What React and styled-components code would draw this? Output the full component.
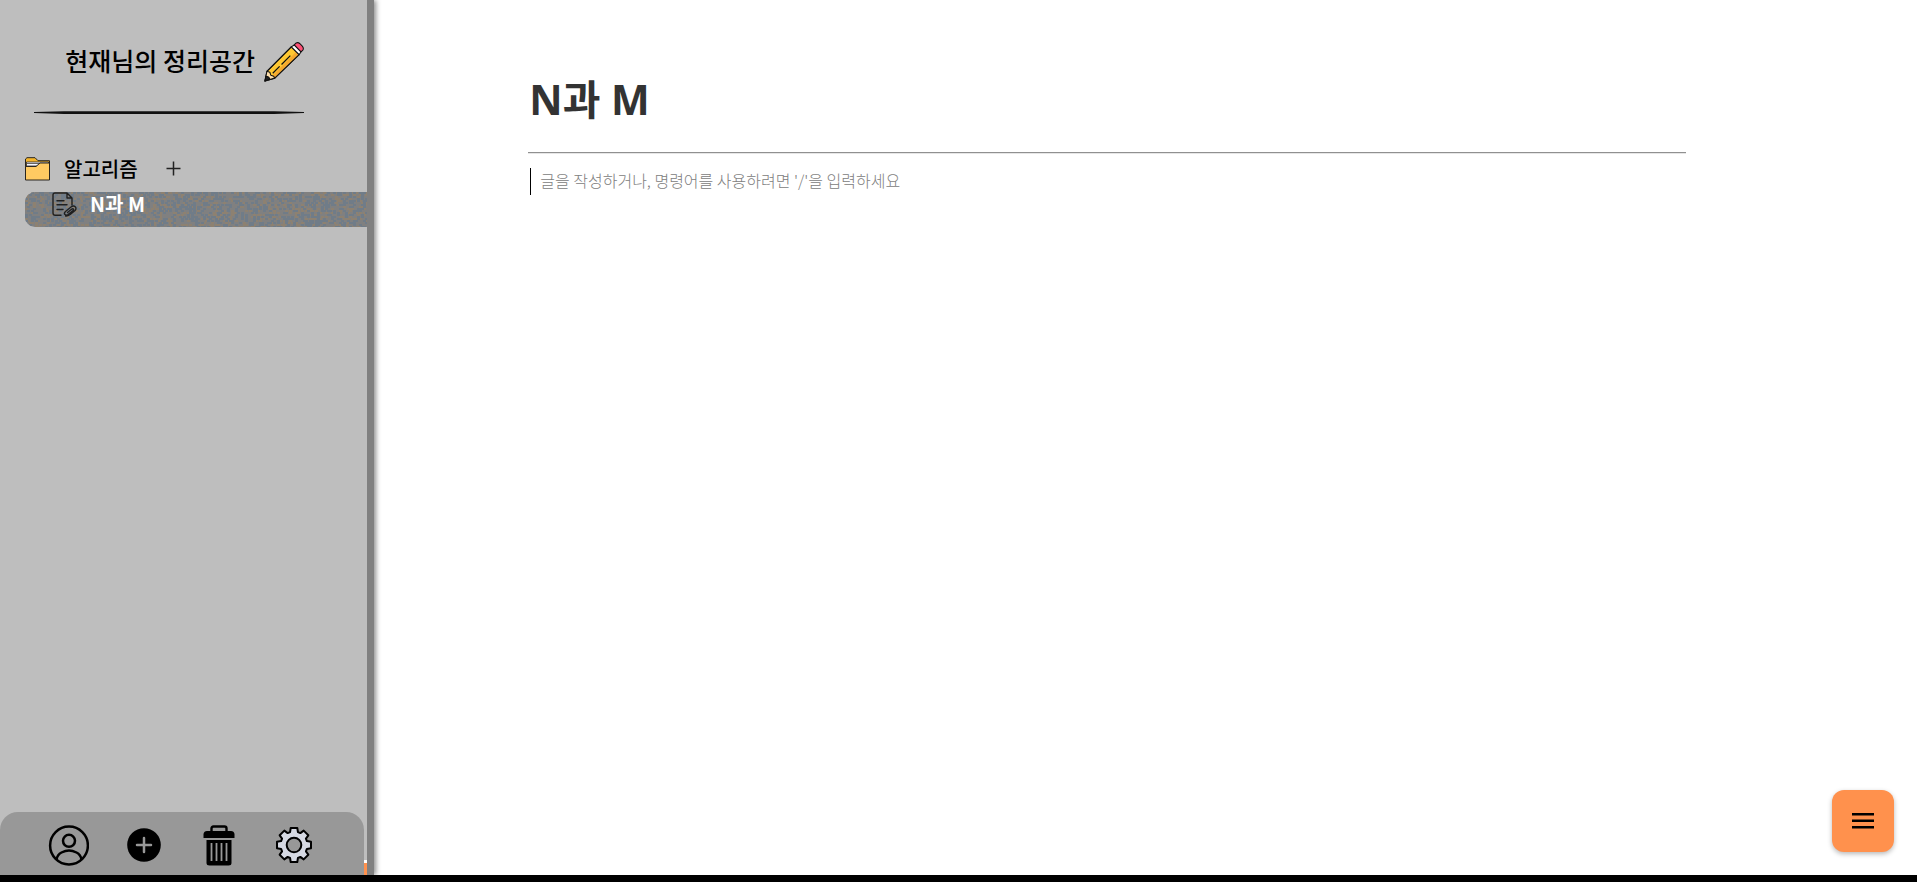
import React from "react";
import styled, { createGlobalStyle } from "styled-components";

const GlobalStyle = createGlobalStyle`
  *, *::before, *::after { box-sizing: border-box; }
  body { margin: 0; background: #000; }
  button { padding: 0; border: 0; background: none; color: inherit; font: inherit; cursor: pointer; }
  svg { display: block; }
`;

const Page = styled.div`
  display: flex;
  height: 100vh;
  border-bottom: 7px solid #000;
  background: #fff;
  font-family: "Noto Sans CJK KR", sans-serif;
`;

const Sidebar = styled.aside`
  display: flex;
  flex-direction: column;
  flex: none;
  width: 374px;
  border-right: 7px solid #808080;
  background: #bebebe;
  box-shadow: 2px 0 5px rgba(0, 0, 0, 0.45);
`;

const Brand = styled.header`
  display: flex;
  flex-direction: column;
  gap: 28px;
  width: 304px;
  padding: 42px 0 0 34px;
`;

const BrandRow = styled.div`
  display: flex;
  align-items: flex-start;
  justify-content: flex-end;
  gap: 8px;
`;

const BrandTitle = styled.h2`
  margin: 0;
  font-size: 25px;
  font-weight: 500;
  line-height: 36px;
  white-space: nowrap;
`;

const Tree = styled.nav`
  flex: 1;
  padding: 31px 0 0 25px;
`;

const FolderRow = styled.div`
  display: flex;
  align-items: center;
  height: 46px;
`;

const FolderLink = styled.a`
  display: flex;
  align-items: center;
  gap: 14px;
  color: #000;
  font-size: 20px;
  font-weight: 500;
  line-height: 28px;
  text-decoration: none;
`;

const AddPageButton = styled.button`
  margin: 0 0 2px 28px;
`;

const PageLink = styled.a`
  position: relative;
  display: flex;
  align-items: flex-start;
  gap: 13px;
  height: 35px;
  padding-left: 27px;
  border-radius: 10px 0 0 10px;
  background: #808080;
  color: #fff;
  font-size: 20px;
  font-weight: 700;
  line-height: 24px;
  text-decoration: none;
`;

const GrainLayer = styled.svg`
  position: absolute;
  inset: 0;
  width: 100%;
  height: 100%;
  border-radius: 10px 0 0 10px;
  overflow: hidden;
`;

const Raised = styled.span`
  position: relative;
`;

const Dock = styled.footer`
  display: flex;
  align-items: flex-end;
  background: #bebebe;
`;

const DockBar = styled.div`
  display: flex;
  align-items: center;
  flex: 1;
  gap: 34px;
  height: 63px;
  padding-left: 48px;
  padding-top: 3px;
  border-radius: 18px 18px 0 0;
  background: #989898;
`;

const DockButton = styled.button`
  display: grid;
  place-items: center;
  width: 41px;
  height: 42px;
`;

const DockEdge = styled.span`
  width: 3px;
  height: 15px;
  border-top: 3px solid #fff;
  background: #ff914d;
`;

const Main = styled.main`
  flex: 1;
  min-width: 0;
  padding-top: 69px;
`;

const Editor = styled.section`
  width: 75%;
  margin-left: 10%;
`;

const Title = styled.h1`
  margin: 0;
  padding: 0 0 23px 1px;
  border-bottom: 1px solid #909090;
  box-shadow: 0 1px 0 #e6e6e6;
  color: #333;
  font-family: "Noto Sans", "Noto Sans CJK KR", sans-serif;
  font-size: 41px;
  font-weight: 700;
  line-height: 60px;
`;

const Line = styled.label`
  display: flex;
  align-items: flex-start;
  gap: 9px;
  padding: 15px 0 0 2px;
`;

const Caret = styled.span`
  width: 1px;
  height: 27px;
  background: #000;
`;

const LineInput = styled.input`
  flex: 1;
  height: 24px;
  padding: 0;
  border: 0;
  outline: 0;
  background: none;
  font-family: "Noto Sans CJK KR", sans-serif;
  font-size: 16px;
  font-weight: 300;
  &::placeholder { color: #808080; opacity: 1; }
`;

const MenuButton = styled.button`
  position: fixed;
  right: 23px;
  bottom: 30px;
  display: grid;
  place-items: center;
  width: 62px;
  height: 62px;
  border-radius: 12px;
  background: #ff914d;
  box-shadow: 0 2px 5px rgba(0, 0, 0, 0.28);
`;

function speckles(seed, share) {
  let state = seed;
  let d = "";
  for (let y = 0; y < 36; y += 2) {
    for (let x = 0; x < 344; x += 2) {
      state = (state * 1664525 + 1013904223) >>> 0;
      if (state / 4294967296 < share) d += `M${x} ${y}h3v2h-3z`;
    }
  }
  return d;
}
const WARM = speckles(905, 0.24);
const COOL = speckles(17, 0.3);

const Grain = () => (
  <GrainLayer aria-hidden="true">
    <path d={WARM} fill="#8d8171" />
    <path d={COOL} fill="#707c88" />
  </GrainLayer>
);

const Pencil = () => (
  <svg width="41" height="41" viewBox="-1 0 42 42" stroke="#111" strokeWidth="1.1" strokeLinejoin="round" aria-hidden="true">
    <path d="M1 40 3 30 28 5 36 13 11 37z" fill="#ffc832" />
    <path d="M8 35 33 10 36 13 11 37z" fill="#f5a92e" stroke="none" />
    <path d="M1 40 3 30 6 31 7 34 10 35 11 37z" fill="#ffe0ac" />
    <path d="M1 40 2 35Q5 35 6 38z" fill="#222" />
    <path d="M3 30 28 5 36 13 11 37" fill="none" />
    <path d="m9 32 7-7m2-2 9-9" fill="none" strokeWidth="1.3" />
    <path d="m28 5 3-2 7 7-2 3z" fill="#fff" />
    <path d="m31 3 2-2q2-1 4 1l2 2q2 2 1 4l-2 2z" fill="#ff5277" />
  </svg>
);

const TaperedRule = () => (
  <svg width="270" height="4" viewBox="0 0 270 4" aria-hidden="true">
    <path d="M0 1 30 .3H240L270 1V2L240 3H30L0 2z" fill="#111" />
  </svg>
);

const Folder = () => (
  <svg width="25" height="24" viewBox="0 0 25 24" stroke="#29251e" strokeLinejoin="round" aria-hidden="true">
    <path d="M.5 22V2L2 .7h8l3 3h11.500V22z" fill="#f5b52b" />
    <path d="M1.500 5h22v4h-22z" fill="#f7f7ff" strokeWidth=".8" />
    <path d="M2 6.500h12" fill="none" strokeWidth=".7" />
    <path d="M.5 9.500H11L15 6h9.500v17H.5z" fill="#ffca62" />
  </svg>
);

const Note = () => (
  <svg width="25" height="25" viewBox="0 0 25 25" fill="none" stroke="#202020" strokeWidth="1.400" strokeLinecap="round" strokeLinejoin="round" aria-hidden="true">
    <path d="M9 23.300H3.200Q1 23.300 1 21V3Q1 1 3 1h12l5 5v7M15 1v5h5M5 8.700h7M5 12.700h10M5 17.500h6" />
    <path d="m15.500 20.500 4-3.200q1.600-1 2 0t-.8 1.500l-4.600 3.700q-2 1.200-3.200 0t.6-3l5.500-4.500q2.500-1.800 4.200-.2t-.4 4l-4.600 3.700q-2.500 1.800-4.600 1.500" />
  </svg>
);

const Plus = () => (
  <svg width="15" height="15" viewBox="0 0 15 15" stroke="#222" strokeWidth="1.500" aria-hidden="true">
    <path d="M7.500.5v14M.5 7.500h14" />
  </svg>
);

const User = () => (
  <svg width="41" height="41" viewBox="0 0 41 41" fill="none" stroke="#000" strokeWidth="2.500" aria-hidden="true">
    <circle cx="21" cy="20.500" r="18.900" />
    <circle cx="21" cy="15.800" r="6" />
    <path d="M8.500 34.500q1-5 5-7t7.500-2 7.500 2 5 7" />
  </svg>
);

const AddCircle = () => (
  <svg width="34" height="34" viewBox="0 0 34 34" aria-hidden="true">
    <circle cx="17" cy="17" r="16.800" />
    <path d="M17 10v14M10 17h14" stroke="#989898" strokeWidth="2.500" strokeLinecap="round" />
  </svg>
);

const Trash = () => (
  <svg width="32" height="41" viewBox="0 0 32 41" aria-hidden="true">
    <path d="M8.500 7V3.500q0-2 2-2h11q2 0 2 2V7" fill="none" stroke="#000" strokeWidth="2.400" />
    <path d="M4 6h24q3 0 3.500 3v4H.5V9Q1 6 4 6zM3.500 15h25v23q0 2.500-3 2.500h-19q-3 0-3-2.500z" />
    <path d="M8.500 18v18M13.500 18v18M18.500 18v18M23.500 18v18" stroke="#989898" strokeWidth="1.800" />
  </svg>
);

function gearPath() {
  const points = [];
  for (let i = 0; i < 8; i += 1) {
    [[-17, 13.5], [-11, 17.3], [11, 17.3], [17, 13.5]].forEach(([turn, r]) => {
      const a = ((i * 45 + turn) * Math.PI) / 180;
      points.push(`${19 + r * Math.sin(a)} ${19 - r * Math.cos(a)}`);
    });
  }
  return `M${points.join("L")}z`;
}
const GEAR = gearPath();

const Gear = () => (
  <svg width="38" height="38" viewBox="0 0 38 38" stroke="#000" strokeWidth="2" strokeLinejoin="round" aria-hidden="true">
    <path d={GEAR} fill="#d6d9e3" />
    <circle cx="19" cy="19" r="7.300" fill="#989898" />
  </svg>
);

const Menu = () => (
  <svg width="24" height="16" viewBox="0 0 24 16" aria-hidden="true">
    <path d="M1 0h22v2.500H1zM1 6.500h22V9H1zM1 13h22v2.500H1z" />
  </svg>
);

export default function App() {
  return (
    <>
      <GlobalStyle />
      <Page>
        <Sidebar>
          <Brand>
            <BrandRow>
              <BrandTitle>현재님의 정리공간</BrandTitle>
              <Pencil />
            </BrandRow>
            <TaperedRule />
          </Brand>
          <Tree>
            <FolderRow>
              <FolderLink href="#algorithm">
                <Folder />
                알고리즘
              </FolderLink>
              <AddPageButton type="button" aria-label="페이지 추가"><Plus /></AddPageButton>
            </FolderRow>
            <PageLink href="#n-and-m" aria-current="page">
              <Grain />
              <Raised><Note /></Raised>
              <Raised>N과 M</Raised>
            </PageLink>
          </Tree>
          <Dock>
            <DockBar>
              <DockButton type="button" aria-label="프로필"><User /></DockButton>
              <DockButton type="button" aria-label="추가"><AddCircle /></DockButton>
              <DockButton type="button" aria-label="휴지통"><Trash /></DockButton>
              <DockButton type="button" aria-label="설정"><Gear /></DockButton>
            </DockBar>
            <DockEdge />
          </Dock>
        </Sidebar>
        <Main>
          <Editor>
            <Title>N과 M</Title>
            <Line>
              <Caret />
              <LineInput type="text" aria-label="본문" placeholder="글을 작성하거나, 명령어를 사용하려면 '/'을 입력하세요" />
            </Line>
          </Editor>
        </Main>
        <MenuButton type="button" aria-label="메뉴"><Menu /></MenuButton>
      </Page>
    </>
  );
}
